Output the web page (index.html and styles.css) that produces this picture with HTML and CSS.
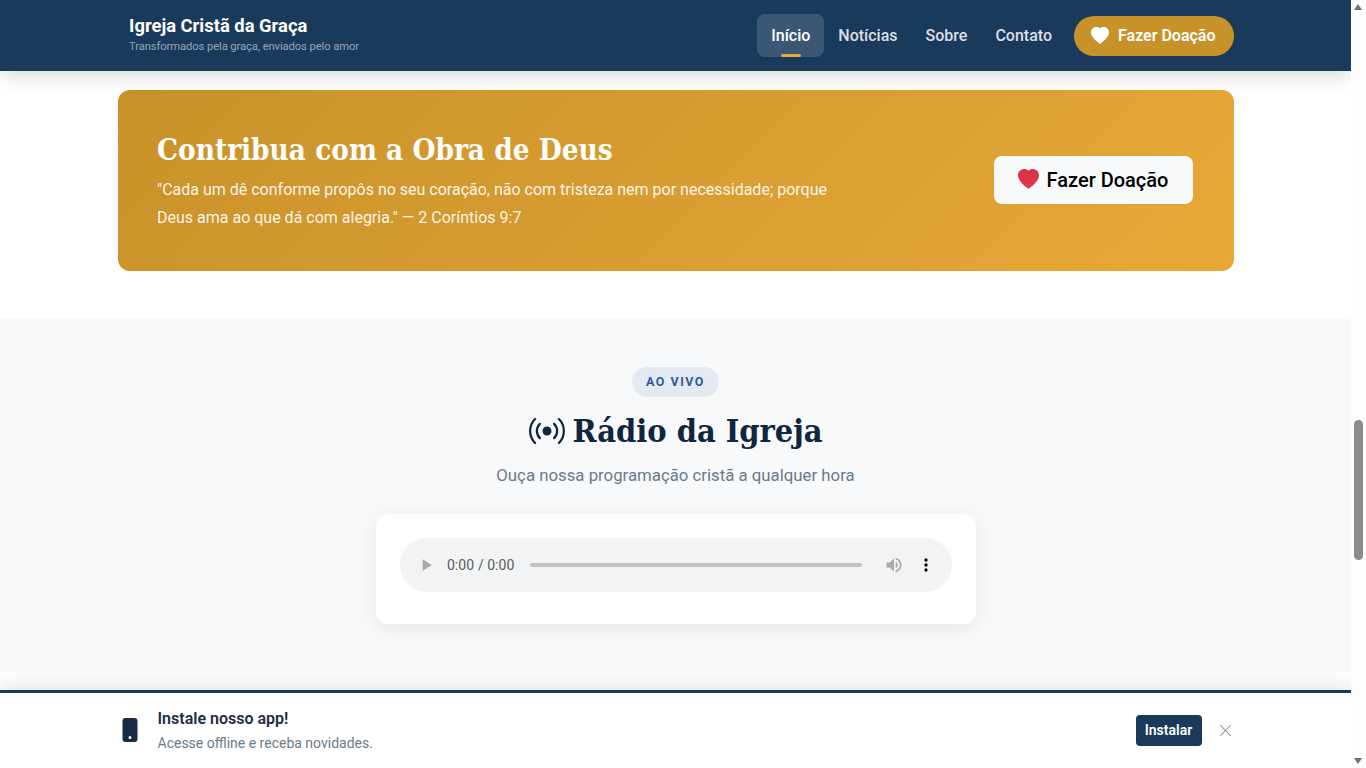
FILE: index.html
```html
<!DOCTYPE html>
<html lang="pt-BR">
<head>
<meta charset="utf-8">
<title>Igreja Cristã da Graça</title>
<link rel="stylesheet" href="styles.css">
</head>
<body>
<div class="viewport">
  <div class="page">
    <header class="topbar">
      <div class="container topbar-inner">
        <a class="brand" href="#">
          <span class="brand-name">Igreja Cristã da Graça</span>
          <span class="brand-tag">Transformados pela graça, enviados pelo amor</span>
        </a>
        <nav class="nav">
          <a class="nav-link active" href="#">Início</a>
          <a class="nav-link" href="#">Notícias</a>
          <a class="nav-link" href="#">Sobre</a>
          <a class="nav-link" href="#">Contato</a>
          <a class="nav-donate" href="#">
            <svg class="icon-donate" viewBox="0 0 16 16" fill="currentColor"><path fill-rule="evenodd" d="M8 1.314C12.438-3.248 23.534 4.735 8 15-7.534 4.736 3.562-3.248 8 1.314z"/></svg>
            Fazer Doação
          </a>
        </nav>
      </div>
    </header>

    <section class="donate-section">
      <div class="container">
        <div class="donate-banner">
          <div class="donate-copy">
            <h2 class="donate-title">Contribua com a Obra de Deus</h2>
            <p class="donate-verse">"Cada um dê conforme propôs no seu coração, não com tristeza nem por necessidade; porque Deus ama ao que dá com alegria." — 2 Coríntios 9:7</p>
          </div>
          <a class="donate-btn" href="#">
            <svg class="icon-btn" viewBox="0 0 16 16" fill="currentColor"><path fill-rule="evenodd" d="M8 1.314C12.438-3.248 23.534 4.735 8 15-7.534 4.736 3.562-3.248 8 1.314z"/></svg>
            Fazer Doação
          </a>
        </div>
      </div>
    </section>

    <section class="radio-section">
      <span class="badge">AO VIVO</span>
      <h2 class="radio-title">
        <svg class="icon-radio" viewBox="0 0 16 16" fill="currentColor"><path d="M3.05 3.05a7 7 0 0 0 0 9.9.5.5 0 0 1-.707.707 8 8 0 0 1 0-11.314.5.5 0 0 1 .707.707zm2.122 2.122a4 4 0 0 0 0 5.656.5.5 0 1 1-.708.708 5 5 0 0 1 0-7.072.5.5 0 0 1 .708.708zm5.656-.708a.5.5 0 0 1 .708 0 5 5 0 0 1 0 7.072.5.5 0 1 1-.708-.708 4 4 0 0 0 0-5.656.5.5 0 0 1 0-.708zm2.122-2.12a.5.5 0 0 1 .707 0 8 8 0 0 1 0 11.313.5.5 0 0 1-.707-.707 7 7 0 0 0 0-9.9.5.5 0 0 1 0-.707zM10 8a2 2 0 1 1-4 0 2 2 0 0 1 4 0z"/></svg>
        Rádio da Igreja
      </h2>
      <p class="radio-sub">Ouça nossa programação cristã a qualquer hora</p>
      <div class="player-card">
        <audio class="player" controls></audio>
      </div>
    </section>

    <aside class="install-bar">
      <div class="container install-inner">
        <svg class="icon-phone" viewBox="0 0 16 16" fill="currentColor"><path d="M3 2a2 2 0 0 1 2-2h6a2 2 0 0 1 2 2v12a2 2 0 0 1-2 2H5a2 2 0 0 1-2-2V2zm6 11a1 1 0 1 0-2 0 1 1 0 0 0 2 0z"/></svg>
        <div class="install-copy">
          <strong class="install-title">Instale nosso app!</strong>
          <span class="install-sub">Acesse offline e receba novidades.</span>
        </div>
        <button class="install-btn" type="button">Instalar</button>
        <button class="install-close" type="button" aria-label="Fechar">
          <svg class="icon-close" viewBox="0 0 16 16" fill="currentColor"><path d="M2.146 2.854a.5.5 0 1 1 .708-.708L8 7.293l5.146-5.147a.5.5 0 0 1 .708.708L8.707 8l5.147 5.146a.5.5 0 0 1-.708.708L8 8.707l-5.146 5.147a.5.5 0 0 1-.708-.708L7.293 8 2.146 2.854Z"/></svg>
        </button>
      </div>
    </aside>
  </div>

  <div class="scrollbar" aria-hidden="true">
    <span class="arrow-up"></span>
    <span class="thumb"></span>
    <span class="arrow-down"></span>
  </div>
</div>
</body>
</html>
```

FILE: styles.css
```css
* { box-sizing: border-box; }
html, body { margin: 0; height: 100%; overflow: hidden; }
body { font-family: Roboto, "Noto Sans", sans-serif; color: #212529; background: #fff; }
a { text-decoration: none; }

.viewport { display: flex; width: 1366px; height: 768px; }
.page { position: relative; width: 1351px; height: 768px; overflow: hidden; background: #fff; }
.container { width: 1116px; margin: 0 auto; }

.topbar { position: relative; z-index: 2; height: 71px; background: #1a3a5c; box-shadow: 0 2px 20px rgba(0,0,0,.2); }
.topbar-inner { height: 100%; display: flex; align-items: center; justify-content: space-between; }
.brand { display: flex; flex-direction: column; padding: 0 0 3px 11.5px; }
.brand-name { font-size: 18.4px; line-height: 24px; font-weight: 700; color: #fff; }
.brand-tag { margin-top: 2px; font-size: 11.2px; line-height: 14px; letter-spacing: -.08px; color: rgba(255,255,255,.55); }

.nav { display: flex; align-items: center; }
.nav-link { position: relative; padding: 0 14px; height: 43px; line-height: 43px; border-radius: 8px; font-size: 16px; font-weight: 500; color: rgba(255,255,255,.85); }
.nav-link.active { color: #fff; background: rgba(255,255,255,.15); }
.nav-link.active::after { content: ""; position: absolute; left: 50%; bottom: 0; width: 20px; height: 3px; margin-left: -10px; border-radius: 2px; background: #e8a838; }
.nav-donate { display: flex; align-items: center; gap: 9px; height: 40px; margin-left: 8px; padding: 0 18px 0 17px; border-radius: 20px; background: #c8922a; color: #fff; font-size: 16px; font-weight: 600; }
.icon-donate { width: 18px; height: 18px; }

.donate-section { padding: 19px 0 48px; }
.donate-banner { display: flex; align-items: center; justify-content: space-between; height: 181px; padding: 0 41px 0 39.5px; border-radius: 12px; background: linear-gradient(135deg, #c8922a, #e8a838); color: #fff; }
.donate-copy { width: 680px; }
.donate-title { margin: 1px 0 7px; font-family: "DejaVu Serif Condensed", "DejaVu Serif", serif; font-stretch: condensed; font-size: 29.4px; line-height: 38px; font-weight: 700; }
.donate-verse { margin: 0; font-size: 16px; line-height: 28px; color: rgba(255,255,255,.92); }
.donate-btn { display: flex; align-items: center; justify-content: center; gap: 8px; width: 199px; height: 48px; margin-bottom: 2px; border-radius: 8px; background: #f8f9fa; color: #000; font-size: 20px; font-weight: 500; }
.icon-btn { width: 21px; height: 21px; color: #dc3545; }

.radio-section { height: 353px; padding-top: 48px; background: #f8f9fa; display: flex; flex-direction: column; align-items: center; }
.badge { height: 30px; line-height: 30px; padding: 0 14px; border-radius: 15px; background: #e4eaf2; color: #2f5a96; font-size: 12.48px; font-weight: 700; letter-spacing: 1.5px; }
.radio-title { display: flex; align-items: center; gap: 8px; margin: 10px 0 0; font-family: "DejaVu Serif Condensed", "DejaVu Serif", serif; font-stretch: condensed; font-size: 32.2px; line-height: 48px; font-weight: 700; color: #0f2540; }
.icon-radio { width: 36px; height: 36px; }
.radio-sub { margin: 8px 0 0; font-size: 16.8px; line-height: 24px; color: #6c7a89; }
.player-card { width: 600px; height: 110px; margin-top: 27px; padding: 24px; border-radius: 12px; background: #fff; box-shadow: 0 4px 20px rgba(0,0,0,.08); }
.player { display: block; width: 552px; height: 54px; }
.player::-webkit-media-controls-current-time-display,
.player::-webkit-media-controls-time-remaining-display { color: #444; }

.install-bar { position: absolute; left: 0; right: 0; bottom: 0; z-index: 3; height: 78px; border-top: 3px solid #1a3a5c; background: #fff; box-shadow: 0 -4px 20px rgba(0,0,0,.12); }
.install-inner { height: 100%; display: flex; align-items: center; }
.icon-phone { width: 24px; height: 24px; margin: 0 16px 2px 0; color: #1a2a44; flex: none; }
.install-copy { display: flex; flex-direction: column; flex: 1; padding-top: 1px; }
.install-title { font-size: 16px; line-height: 24px; font-weight: 600; color: #212d3f; }
.install-sub { font-size: 14px; line-height: 24px; color: #6c7a89; }
.install-btn { width: 66px; height: 31px; padding: 0 0 2px; border: 0; border-radius: 4px; background: #1a3a5c; color: #fff; font: 600 14px Roboto, sans-serif; }
.install-close { display: flex; margin: 0 1px 0 16px; padding: 0; border: 0; background: none; color: #8a94a0; }
.icon-close { width: 15px; height: 15px; }

.scrollbar { position: relative; width: 15px; height: 768px; background: #fdfdfd; }
.thumb { position: absolute; top: 420px; left: 3px; width: 9px; height: 140px; border-radius: 5px; background: #8b8b8b; }
.arrow-up, .arrow-down { position: absolute; left: 3px; width: 0; height: 0; border-left: 4.5px solid transparent; border-right: 4.5px solid transparent; }
.arrow-up { top: 4px; border-bottom: 6px solid #6e6e6e; }
.arrow-down { bottom: 4px; border-top: 6px solid #6e6e6e; }
```
